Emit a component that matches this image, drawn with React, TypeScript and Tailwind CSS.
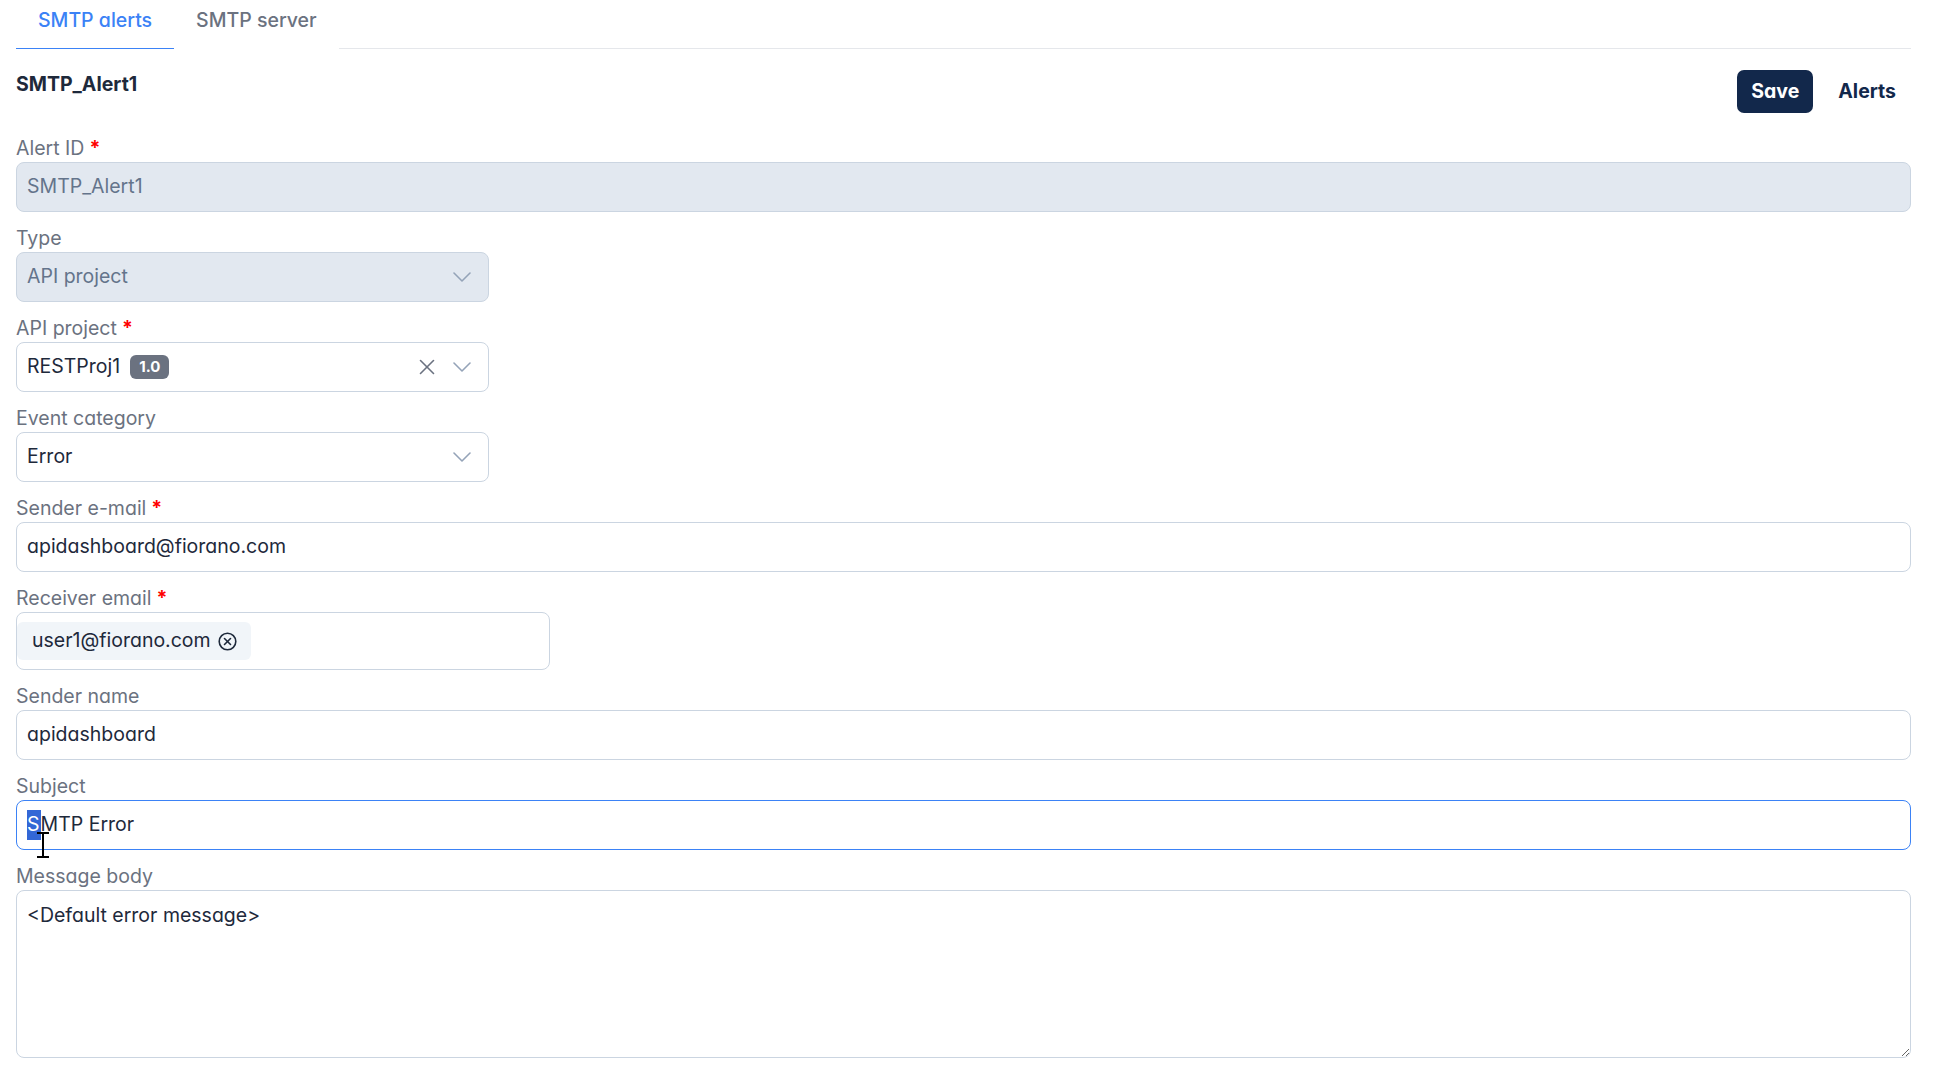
import React from "react";

function Chevron() {
  return (
    <svg width="18" height="10" viewBox="0 0 18 10" fill="none" className="shrink-0">
      <polyline points="1,1 9,9 17,1" stroke="#94a3b8" strokeWidth="1.6" strokeLinecap="round" strokeLinejoin="round" />
    </svg>
  );
}

function XIcon() {
  return (
    <svg width="16" height="16" viewBox="0 0 16 16" fill="none" className="shrink-0">
      <line x1="1.5" y1="1.5" x2="14.5" y2="14.5" stroke="#6b7280" strokeWidth="1.6" strokeLinecap="round" />
      <line x1="14.5" y1="1.5" x2="1.5" y2="14.5" stroke="#6b7280" strokeWidth="1.6" strokeLinecap="round" />
    </svg>
  );
}

function CircleX() {
  return (
    <svg width="19" height="19" viewBox="0 0 19 19" fill="none" className="shrink-0">
      <circle cx="9.5" cy="9.5" r="8.3" stroke="#1e293b" strokeWidth="1.6" />
      <line x1="6.5" y1="6.5" x2="12.5" y2="12.5" stroke="#1e293b" strokeWidth="1.6" strokeLinecap="round" />
      <line x1="12.5" y1="6.5" x2="6.5" y2="12.5" stroke="#1e293b" strokeWidth="1.6" strokeLinecap="round" />
    </svg>
  );
}

function Label({ text, required }: { text: string; required?: boolean }) {
  return (
    <div className="text-[19.5px] leading-7 text-[#6b7280]">
      {text}
      {required && <span className="ml-[5px] font-bold text-[#ff0000]">*</span>}
    </div>
  );
}

export default function App() {
  return (
    <div className="min-h-screen bg-white pl-[16px] pr-[22px] font-['Inter',sans-serif] [font-feature-settings:'cv11'] antialiased">
      {/* Tabs */}
      <div className="flex">
        <div className="border-b border-[#3b82f6] px-[22px] pt-[6px] pb-[14px] text-[19.5px] leading-7 font-medium text-[#3b82f6]">
          SMTP alerts
        </div>
        <div className="border-b border-transparent px-[22px] pt-[6px] pb-[14px] text-[19.5px] leading-7 font-medium text-[#6b7280]">
          SMTP server
        </div>
        <div className="flex-1 border-b border-[#e5e7eb]" />
      </div>

      {/* Header */}
      <div className="mt-[21px] flex items-start justify-between">
        <div className="text-[19.5px] leading-7 font-bold text-[#1e293b]">SMTP_Alert1</div>
        <div className="flex items-center">
          <button className="h-[43px] rounded-[7px] bg-[#12284b] px-[14px] text-[19.5px] font-bold text-white">
            Save
          </button>
          <button className="ml-[10px] h-[43px] px-[15px] text-[19.5px] font-bold text-[#12284b]">
            Alerts
          </button>
        </div>
      </div>

      {/* Form */}
      <div className="mt-[21px] flex flex-col gap-[12px]">
        <div>
          <Label text="Alert ID" required />
          <div className="flex h-[50px] items-center rounded-[8px] border border-[#cbd5e1] bg-[#e2e8f0] px-[10px] text-[19.5px] text-[#64748b]">
            SMTP_Alert1
          </div>
        </div>

        <div>
          <Label text="Type" />
          <div className="flex h-[50px] w-[473px] items-center justify-between rounded-[8px] border border-[#cbd5e1] bg-[#e2e8f0] pl-[10px] pr-[17px] text-[19.5px] text-[#64748b]">
            <span>API project</span>
            <Chevron />
          </div>
        </div>

        <div>
          <Label text="API project" required />
          <div className="flex h-[50px] w-[473px] items-center justify-between rounded-[8px] border border-[#cbd5e1] bg-white pl-[10px] pr-[17px] text-[19.5px] text-[#1e293b]">
            <div className="flex items-center gap-[10px]">
              <span>RESTProj1</span>
              <span className="flex h-[24px] items-center rounded-[6px] bg-[#6b7280] px-[9px] text-[15px] font-bold text-white">
                1.0
              </span>
            </div>
            <div className="flex items-center gap-[18px]">
              <XIcon />
              <Chevron />
            </div>
          </div>
        </div>

        <div>
          <Label text="Event category" />
          <div className="flex h-[50px] w-[473px] items-center justify-between rounded-[8px] border border-[#cbd5e1] bg-white pl-[10px] pr-[17px] text-[19.5px] text-[#1e293b]">
            <span>Error</span>
            <Chevron />
          </div>
        </div>

        <div>
          <Label text="Sender e-mail" required />
          <div className="flex h-[50px] items-center rounded-[8px] border border-[#cbd5e1] bg-white px-[10px] text-[19.5px] text-[#1e293b]">
            apidashboard@fiorano.com
          </div>
        </div>

        <div>
          <Label text="Receiver email" required />
          <div className="flex h-[58px] w-[534px] items-center rounded-[8px] border border-[#cbd5e1] bg-white py-[9px]">
            <div className="flex h-[38px] items-center gap-[7px] rounded-[6px] bg-[#f1f5f9] pl-[15px] pr-[14px] text-[19.5px] text-[#1e293b]">
              <span>user1@fiorano.com</span>
              <CircleX />
            </div>
          </div>
        </div>

        <div>
          <Label text="Sender name" />
          <div className="flex h-[50px] items-center rounded-[8px] border border-[#cbd5e1] bg-white px-[10px] text-[19.5px] text-[#1e293b]">
            apidashboard
          </div>
        </div>

        <div>
          <Label text="Subject" />
          <div className="relative flex h-[50px] items-center rounded-[8px] border border-[#3b82f6] bg-white px-[10px] text-[19.5px] text-[#1e293b]">
            <span className="bg-[#3367d6] pr-[1px] text-white">S</span>
            <span>MTP Error</span>
            <svg
              width="16"
              height="26"
              viewBox="0 0 16 26"
              className="pointer-events-none absolute left-[18px] top-[31px]"
            >
              <path d="M2 1 H14 M8 1 V25 M2 25 H14" stroke="#000" strokeWidth="2" fill="none" />
            </svg>
          </div>
        </div>

        <div>
          <Label text="Message body" />
          <textarea
            readOnly
            defaultValue="<Default error message>"
            className="block h-[168px] w-full rounded-[8px] border border-[#cbd5e1] bg-white px-[10px] py-[10px] text-[19.5px] leading-7 text-[#1e293b] outline-none"
          />
        </div>
      </div>
    </div>
  );
}
